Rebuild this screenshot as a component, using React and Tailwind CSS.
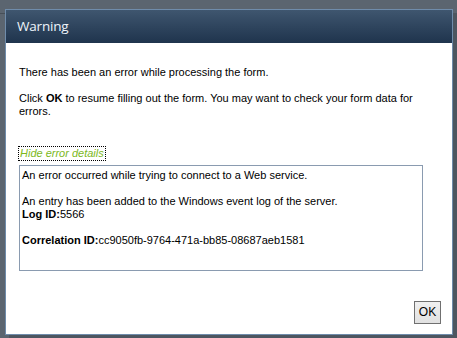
export default function App() {
  return (
    <div className="relative w-[457px] h-[338px] bg-[#5b6570] overflow-hidden font-['Liberation_Sans',sans-serif]">
      <div className="h-[14px] border-b border-[#474f58]" />

      {/* modal */}
      <div className="absolute left-[5px] top-[9px] w-[448px] h-[326px] border border-[#6f8cab] bg-white shadow-[4px_4px_0_#4d5660] flex flex-col">
        <div className="h-[33px] shrink-0 bg-gradient-to-b from-[#3f566f] to-[#1f344d] flex items-center px-[11px]">
          <span className="text-[13.5px] text-[#eef4fb] font-['Open_Sans',sans-serif] tracking-[-0.2px]">
            Warning
          </span>
        </div>

        <div className="flex-1 flex flex-col px-[13px] pt-[23px] text-[11px] leading-[13px] text-black">
          <p>There has been an error while processing the form.</p>
          <p className="mt-[13px]">
            Click <b>OK</b> to resume filling out the form. You may want to check your form data for
            errors.
          </p>

          <div className="mt-[29px]">
            <a
              href="#"
              className="inline-block italic text-[#7cb81c] outline-1 outline-dotted outline-black leading-[13px] px-px"
            >
              Hide error details
            </a>
          </div>

          <div className="mt-[5px] w-[404px] h-[106px] border border-[#8a9bb0] px-[2px] pt-[3px]">
            <p>An error occurred while trying to connect to a Web service.</p>
            <p className="mt-[13px]">An entry has been added to the Windows event log of the server.</p>
            <p>
              <b>Log ID:</b>5566
            </p>
            <p className="mt-[13px]">
              <b>Correlation ID:</b>cc9050fb-9764-471a-bb85-08687aeb1581
            </p>
          </div>

          <div className="flex justify-end mt-[30px]">
            <button className="w-[27px] h-[23px] border border-[#707070] bg-gradient-to-b from-[#f0f0f0] to-[#e1e1e1] text-[12px] text-black flex items-center justify-center -mr-[2px]">
              OK
            </button>
          </div>
        </div>
      </div>
    </div>
  );
}
